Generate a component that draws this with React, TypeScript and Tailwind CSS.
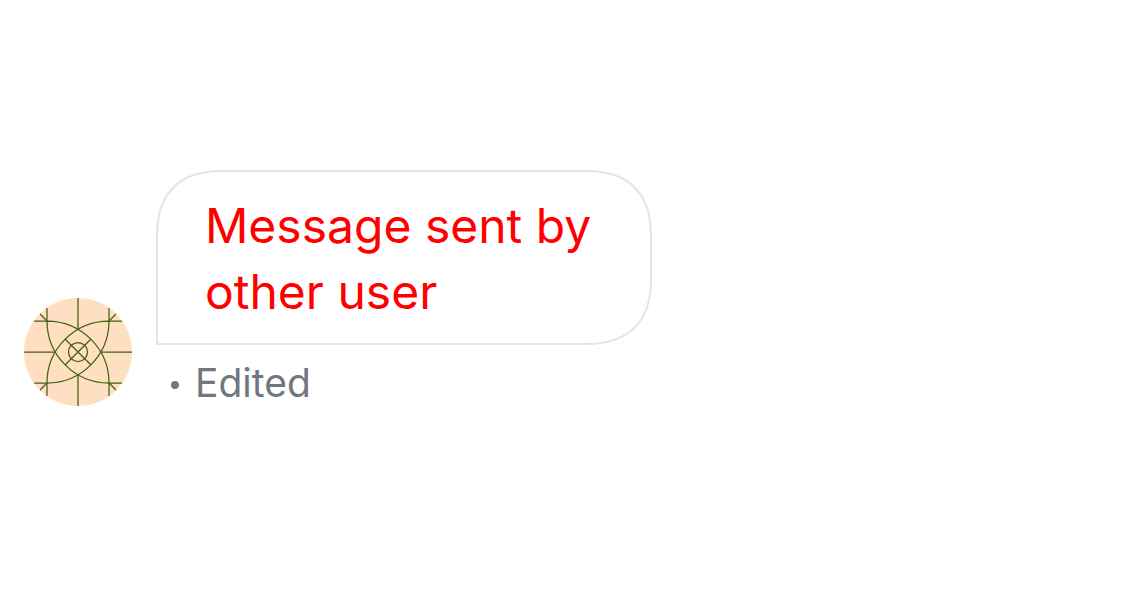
function Avatar() {
  return (
    <svg
      className="size-[108px] shrink-0 rounded-full bg-[#ffdfc2]"
      viewBox="0 0 108 108"
      fill="none"
      stroke="#43600f"
      strokeWidth="1.25"
      role="img"
      aria-label="User avatar"
    >
      <path d="M54 0V31M54 77V108M0 54H31M77 54H108" />
      <path d="M23 10V23H10M85 10V23H98M23 98V85H10M85 98V85H98" />
      <path d="M16 16L23 23M92 16L85 23M16 92L23 85M92 92L85 85" />
      <path d="M23 23A62 62 0 0 1 85 85M85 23A62 62 0 0 1 23 85M85 85A62 62 0 0 1 23 23M23 85A62 62 0 0 1 85 23" />
      <path d="M41 41L67 67M67 41L41 67" />
      <circle cx="54" cy="54" r="9.5" />
    </svg>
  );
}

export default function App() {
  return (
    <main className="min-h-screen bg-white px-6 pt-[170px] font-['Inter',sans-serif]">
      <article className="flex items-end gap-6">
        <Avatar />
        <div className="flex min-w-0 flex-col">
          <p className="max-w-[496px] rounded-[68px] rounded-bl-none border-2 border-[#e4e5e9] pt-[21px] pr-12 pb-[18px] pl-[47px] text-[48px] leading-[66px] text-[#ff0000] [corner-shape:superellipse(1.3)]">
            Message sent by other user
          </p>
          <p className="flex items-center gap-4 pt-[15px] pl-[15px] text-[39px] leading-[46px] text-[#72767e]">
            <span className="mt-1 size-2 rounded-full bg-[#72767e]" />
            Edited
          </p>
        </div>
      </article>
    </main>
  );
}
